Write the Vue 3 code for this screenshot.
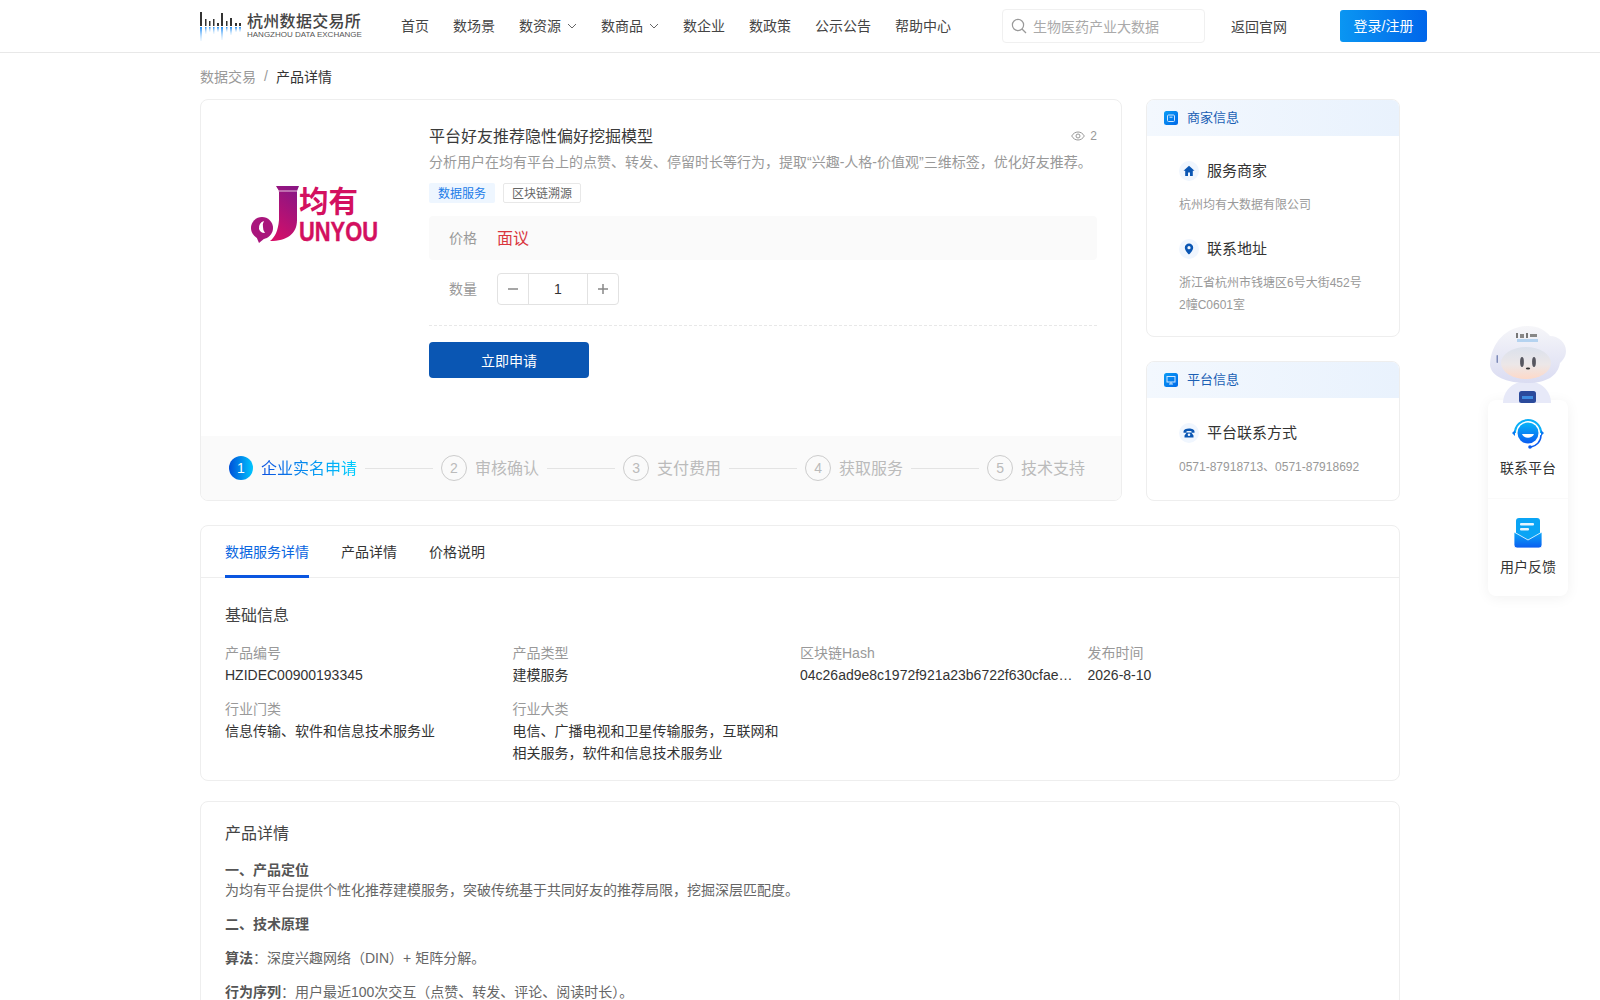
<script setup>
const nav = [
  { t: '首页' }, { t: '数场景' }, { t: '数资源', arrow: true }, { t: '数商品', arrow: true },
  { t: '数企业' }, { t: '数政策' }, { t: '公示公告' }, { t: '帮助中心' }
]
const steps = ['审核确认', '支付费用', '获取服务', '技术支持']
const tabs = ['数据服务详情', '产品详情', '价格说明']
const info = [
  { l: '产品编号', v: 'HZIDEC00900193345' },
  { l: '产品类型', v: '建模服务' },
  { l: '区块链Hash', v: '04c26ad9e8c1972f921a23b6722f630cfae8d4', cut: true },
  { l: '发布时间', v: '2026-8-10' },
  { l: '行业门类', v: '信息传输、软件和信息技术服务业' },
  { l: '行业大类', v: '电信、广播电视和卫星传输服务，互联网和相关服务，软件和信息技术服务业' }
]
const logoBars = [
  [0, 14, 2], [5, 7, 1.5], [9, 5, 1.5], [13, 7, 1.5], [17, 3, 2], [21, 13, 2], [26, 5, 1.5], [30, 8, 2], [35, 3, 2], [39, 3, 2]
]
</script>

<template>
  <div class="page">
    <header class="top">
      <div class="brand">
        <svg class="brand-mark" width="42" height="30" viewBox="0 0 42 30">
          <defs>
            <linearGradient id="fade" x1="0" y1="0" x2="0" y2="1">
              <stop offset="0" stop-color="#1f8cf5" />
              <stop offset="1" stop-color="#bfe0fb" stop-opacity=".2" />
            </linearGradient>
          </defs>
          <g v-for="(b, i) in logoBars" :key="i">
            <rect :x="b[0]" :y="15 - b[1]" :width="b[2]" :height="b[1]" fill="#333" />
            <rect :x="b[0]" y="16" :width="b[2]" :height="Math.max(b[1], 5)" fill="url(#fade)" />
          </g>
        </svg>
        <div class="brand-text">
          <div class="brand-cn">杭州数据交易所</div>
          <div class="brand-en">HANGZHOU DATA EXCHANGE</div>
        </div>
      </div>
      <nav class="nav">
        <span v-for="n in nav" :key="n.t" class="nav-item">
          {{ n.t }}
          <svg v-if="n.arrow" class="chev" width="10" height="6" viewBox="0 0 10 6">
            <path d="M1 1l4 4 4-4" fill="none" stroke="#666" stroke-width="1" />
          </svg>
        </span>
      </nav>
      <div class="spacer"></div>
      <div class="search">
        <svg width="16" height="16" viewBox="0 0 16 16">
          <circle cx="7" cy="7" r="5.6" fill="none" stroke="#999" stroke-width="1.2" />
          <path d="M11 11l4 4" stroke="#999" stroke-width="1.2" />
        </svg>
        <span>生物医药产业大数据</span>
      </div>
      <a class="back">返回官网</a>
      <button class="login">登录/注册</button>
    </header>

    <div class="crumb"><span class="c1">数据交易</span><span class="sep">/</span><span class="c2">产品详情</span></div>

    <main class="wrap">
      <section class="upper">
        <div class="product">
          <div class="prod-top">
            <div class="logo-box">
              <svg class="junyou" width="132" height="80" viewBox="0 -10 132 80">
                <defs>
                  <linearGradient id="jg" x1="0.6" y1="0" x2="0.2" y2="1">
                    <stop offset="0" stop-color="#8c1583" />
                    <stop offset="1" stop-color="#d60f68" />
                  </linearGradient>
                </defs>
                <path d="M27 2H50L48 7V36C48 50 38 57 21 57C26 53 29 47 30 36V7Z" fill="url(#jg)" />
                <path d="M29 7H48" stroke="#e9c4de" stroke-width="1" />
                <circle cx="13" cy="44" r="11" fill="#a9157c" />
                <path d="M7 52l9 2-6 5z" fill="#a9157c" />
                <path d="M15 37a7 7 0 0 0-5 8 6 6 0 0 0 6 4 9 9 0 0 1-2-6 8 8 0 0 1 1-6z" fill="#fff" />
                <text class="jy-cn" x="50" y="28" font-size="29.500" fill="#d3105f">均有</text>
                <text class="jy-en" x="50" y="57" font-size="27" fill="#d3105f" stroke="#d3105f" stroke-width=".4" textLength="79" lengthAdjust="spacingAndGlyphs">UNYOU</text>
              </svg>
            </div>
            <div class="prod-info">
              <div class="title-row">
                <h1>平台好友推荐隐性偏好挖掘模型</h1>
                <span class="views">
                  <svg width="14" height="10" viewBox="0 0 14 10">
                    <path d="M.7 5C2.2 2.4 4.4 1 7 1s4.8 1.400 6.300 4C11.800 7.600 9.600 9 7 9S2.200 7.600.7 5z" fill="none" stroke="#999" />
                    <circle cx="7" cy="5" r="2" fill="none" stroke="#999" />
                  </svg>
                  2
                </span>
              </div>
              <p class="desc">分析用户在均有平台上的点赞、转发、停留时长等行为，提取“兴趣-人格-价值观”三维标签，优化好友推荐。</p>
              <div class="tags"><span class="tag blue">数据服务</span><span class="tag line">区块链溯源</span></div>
              <div class="price"><span class="lab">价格</span><span class="pv">面议</span></div>
              <div class="qty">
                <span class="lab">数量</span>
                <div class="stepper">
                  <span class="st-btn">
                    <svg width="12" height="12" viewBox="0 0 12 12"><path d="M1 6h10" stroke="#888" stroke-width="1.500" /></svg>
                  </span>
                  <span class="st-val">1</span>
                  <span class="st-btn">
                    <svg width="12" height="12" viewBox="0 0 12 12"><path d="M1 6h10M6 1v10" stroke="#888" stroke-width="1.500" /></svg>
                  </span>
                </div>
              </div>
              <div class="dash"></div>
              <button class="apply">立即申请</button>
            </div>
          </div>
          <div class="steps">
            <span class="dot-on">1</span>
            <span class="step-on">企业实名申请</span>
            <template v-for="(s, i) in steps" :key="s">
              <span class="line-s"></span>
              <span class="dot">{{ i + 2 }}</span>
              <span class="step">{{ s }}</span>
            </template>
          </div>
        </div>

        <aside class="side">
          <div class="side-card grow-a">
            <div class="side-head">
              <svg width="14" height="14" viewBox="0 0 14 14">
                <defs>
                  <linearGradient id="sq" x1="0" y1="0" x2="1" y2="1">
                    <stop offset="0" stop-color="#0a9cf5" /><stop offset="1" stop-color="#0068e8" />
                  </linearGradient>
                </defs>
                <rect width="14" height="14" rx="2.500" fill="url(#sq)" />
                <rect x="3.500" y="4" width="7" height="6.500" rx="1" fill="none" stroke="#cfe6ff" />
                <path d="M5.500 6.200h3" stroke="#cfe6ff" />
              </svg>
              <span>商家信息</span>
            </div>
            <div class="side-body">
              <div class="row-h">
                <span class="round">
                  <svg width="12" height="12" viewBox="0 0 12 12"><path d="M6 .8L.5 5.800h1.700V11h2.800V7.500h2V11h2.800V5.800h1.700z" fill="#0a56b3" /></svg>
                </span>
                <span class="rt">服务商家</span>
              </div>
              <p class="sub">杭州均有大数据有限公司</p>
              <div class="row-h mt">
                <span class="round">
                  <svg width="12" height="12" viewBox="0 0 12 12"><path fill-rule="evenodd" d="M6 .5a4.200 4.200 0 0 0-4.200 4.200C1.800 7.500 6 11.500 6 11.500s4.200-4 4.200-6.800A4.200 4.200 0 0 0 6 .5zm0 2.600a1.600 1.600 0 1 1 0 3.200 1.600 1.600 0 0 1 0-3.200z" fill="#0a56b3" /></svg>
                </span>
                <span class="rt">联系地址</span>
              </div>
              <p class="sub">浙江省杭州市钱塘区6号大街452号2幢C0601室</p>
            </div>
          </div>
          <div class="side-card grow-b">
            <div class="side-head">
              <svg width="14" height="14" viewBox="0 0 14 14">
                <rect width="14" height="14" rx="2.500" fill="url(#sq)" />
                <rect x="3" y="3.500" width="8" height="5.500" fill="none" stroke="#cfe6ff" />
                <path d="M5 11h4M7 9v2" stroke="#cfe6ff" />
              </svg>
              <span>平台信息</span>
            </div>
            <div class="side-body">
              <div class="row-h">
                <span class="round">
                  <svg width="12" height="12" viewBox="0 0 12 12"><path d="M.5 4.500C.5 2.600 3 1.500 6 1.500s5.500 1.100 5.500 3v1.200H8.500V4.300c-1.500-.5-3.500-.5-5 0v1.400H.5zM3.700 5.500h4.600l2.200 3v2h-9v-2zM6 6.500a1.300 1.300 0 1 0 0 2.600 1.300 1.300 0 0 0 0-2.600z" fill="#0a56b3" /></svg>
                </span>
                <span class="rt">平台联系方式</span>
              </div>
              <p class="sub">0571-87918713、0571-87918692</p>
            </div>
          </div>
        </aside>
      </section>

      <section class="card tabs-card">
        <div class="tabs">
          <span v-for="(t, i) in tabs" :key="t" class="tab" :class="{ on: i === 0 }">{{ t }}</span>
        </div>
        <div class="basic">
          <h2>基础信息</h2>
          <div class="grid">
            <div v-for="c in info" :key="c.l" class="cell">
              <div class="cl">{{ c.l }}</div>
              <div class="cv" :class="{ cut: c.cut }">{{ c.v }}</div>
            </div>
          </div>
        </div>
      </section>

      <section class="card detail">
        <h2>产品详情</h2>
        <p class="d0"><b>一、产品定位</b></p>
        <p class="d0">为均有平台提供个性化推荐建模服务，突破传统基于共同好友的推荐局限，挖掘深层匹配度。</p>
        <p class="d1"><b>二、技术原理</b></p>
        <p class="d1"><b>算法</b>：深度兴趣网络（DIN）+ 矩阵分解。</p>
        <p class="d1"><b>行为序列</b>：用户最近100次交互（点赞、转发、评论、阅读时长）。</p>
      </section>
    </main>

    <div class="float">
      <svg class="robot" width="80" height="78" viewBox="0 0 80 78">
        <defs>
          <linearGradient id="hd" x1="0" y1="0" x2="0" y2="1">
            <stop offset="0" stop-color="#f6f6f9" /><stop offset="1" stop-color="#dadcf2" />
          </linearGradient>
          <linearGradient id="vs" x1="0" y1="0" x2="0" y2="1">
            <stop offset="0" stop-color="#dbe1ec" /><stop offset=".55" stop-color="#ece7e8" /><stop offset="1" stop-color="#fdd9c8" />
          </linearGradient>
        </defs>
        <path d="M15 78c0-12 10-22 24-22s24 10 24 22z" fill="#e7e9f8" />
        <rect x="31" y="66" width="17" height="12" rx="2.500" fill="#2b4a9b" />
        <rect x="34" y="71" width="11" height="3" fill="#3d8be0" />
        <path d="M2 40C3 16 20 1 40 1c10 0 17 4 22 10 9 0 16 7 16 15 0 6-4 10-6 12-2 13-14 20-32 20C20 58 3 52 2 40z" fill="url(#hd)" />
        <ellipse cx="38" cy="38" rx="25" ry="16" fill="url(#vs)" />
        <ellipse cx="34" cy="37" rx="1.900" ry="5" fill="#56565f" />
        <ellipse cx="46" cy="37" rx="1.900" ry="5" fill="#56565f" />
        <ellipse cx="40" cy="43.500" rx="2.200" ry="1.100" fill="#333" />
        <rect x="28" y="8" width="2" height="5" fill="#777" /><rect x="32" y="9" width="4" height="4" fill="#888" />
        <rect x="38" y="8" width="2" height="5" fill="#777" /><rect x="42" y="9" width="7" height="3" fill="#888" />
        <rect x="29" y="14" width="21" height="3" fill="#b5d3f0" />
        <rect x="8.500" y="30" width="1.500" height="8" rx=".7" fill="#7d8ab8" />
      </svg>
      <div class="f-item">
        <svg width="34" height="30" viewBox="0 0 34 30">
          <defs>
            <linearGradient id="hs" x1="0" y1="0" x2="0" y2="1">
              <stop offset="0" stop-color="#08b4f8" /><stop offset="1" stop-color="#0a5cf0" />
            </linearGradient>
          </defs>
          <circle cx="17" cy="14" r="10.500" fill="url(#hs)" />
          <path d="M4 14a13 13 0 0 1 26 0" fill="none" stroke="#0ab0f8" stroke-width="2" />
          <path d="M1 14l3-3v6zM33 14l-3-3v6z" fill="#0a78f0" />
          <path d="M30 16c0 7-5 11-10 12" fill="none" stroke="#0a5cf0" stroke-width="1.500" />
          <circle cx="19" cy="28" r="1.800" fill="#0a5cf0" />
          <path d="M11 15c2 5 10 5 12 0z" fill="#fff" />
        </svg>
        <span>联系平台</span>
      </div>
      <div class="f-item second">
        <svg width="28" height="30" viewBox="0 0 28 30">
          <defs>
            <linearGradient id="ml" x1="0" y1="0" x2="0" y2="1">
              <stop offset="0" stop-color="#0aa8f8" /><stop offset="1" stop-color="#0a5cf0" />
            </linearGradient>
          </defs>
          <rect x="2" y="0" width="24" height="22" rx="3" fill="#0aa4f5" />
          <rect x="6" y="5" width="14" height="2.400" rx="1" fill="#e4f4ff" />
          <rect x="6" y="10" width="9" height="2.400" rx="1" fill="#e4f4ff" />
          <path d="M0 14l14 8 14-8v13a3 3 0 0 1-3 3H3a3 3 0 0 1-3-3z" fill="url(#ml)" stroke="#fff" stroke-width=".8" />
        </svg>
        <span>用户反馈</span>
      </div>
    </div>
  </div>
</template>

<style>
html, body { margin: 0; background: #fff; }
</style>

<style scoped>
* { box-sizing: border-box; }
.page {
  height: 1000px;
  overflow: hidden;
  position: relative;
  font-family: "Liberation Sans", "Noto Sans CJK SC", sans-serif;
  font-size: 14px;
  color: #333;
}
.top {
  height: 53px;
  display: flex;
  align-items: center;
  padding: 0 173px 0 200px;
  border-bottom: 1px solid #e8e8e8;
}
.brand { display: flex; align-items: center; width: 162px; margin-right: 39px; }
.brand-mark { flex: none; margin-right: 5px; }
.brand-cn { font-size: 16px; line-height: 19px; font-weight: 500; color: #444; letter-spacing: .3px; white-space: nowrap; }
.brand-en { font-size: 8px; line-height: 10px; margin-top: -1px; color: #555; white-space: nowrap; }
.nav { display: flex; gap: 24px; padding-bottom: 2px; }
.nav-item { display: flex; align-items: center; color: #444; white-space: nowrap; }
.chev { margin-left: 6px; margin-top: 2px; }
.spacer { flex: 1; }
.search {
  width: 203px; height: 34px; margin-right: 26px; padding-left: 8px;
  display: flex; align-items: center; gap: 6px;
  border: 1px solid #f0f0f0; border-radius: 4px; color: #aaa;
}
.back { width: 56px; margin-right: 53px; color: #444; white-space: nowrap; }
.login {
  width: 87px; height: 32px; margin-bottom: 1px; padding: 0 0 2px; border: 0; border-radius: 3px;
  background: linear-gradient(90deg, #0a96f2, #0066ea); color: #fff; font: inherit;
}
.crumb { height: 46px; padding: 0 0 1px 200px; display: flex; align-items: center; }
.c1 { color: #999; }
.sep { color: #999; margin: 0 8px; }
.c2 { color: #333; }
.wrap { width: 1200px; margin: 0 auto; display: flex; flex-direction: column; }
.upper { display: flex; gap: 24px; height: 402px; }
.product {
  width: 922px; border: 1px solid #eee; border-radius: 8px;
  display: flex; flex-direction: column; overflow: hidden;
}
.prod-top { flex: 1; display: flex; }
.logo-box { width: 228px; height: 228px; flex: none; display: flex; align-items: center; justify-content: center; }
.jy-cn { font-family: "Noto Sans CJK SC", sans-serif; font-weight: 700; }
.jy-en { font-family: "Liberation Sans", sans-serif; font-weight: 700; }
.prod-info { flex: 1; padding: 24px 24px 0 0; min-width: 0; }
.title-row { display: flex; justify-content: space-between; align-items: center; height: 24px; }
h1 { margin: 0; padding-bottom: 2px; font-size: 16px; font-weight: 400; color: #3a3a3a; }
.views { display: flex; align-items: center; gap: 5px; font-size: 12px; color: #999; }
.desc { margin: 3px 0 0; line-height: 22px; color: #999; white-space: nowrap; }
.tags { display: flex; gap: 8px; margin-top: 10px; }
.tag { height: 20px; line-height: 20px; padding: 0 8px; font-size: 12px; border-radius: 2px; border: 1px solid transparent; }
.tag.blue { width: 66px; background: #eef6ff; color: #1b7ce8; padding: 0 8px; }
.tag.line { width: 78px; border-color: #e8e8e8; color: #666; }
.price {
  height: 44px; margin-top: 13px; padding: 0 0 2px 20px; background: #fafafa; border-radius: 4px;
  display: flex; align-items: center;
}
.lab { width: 48px; color: #999; flex: none; }
.pv { font-size: 16px; color: #d9363e; }
.qty { height: 32px; margin-top: 13px; padding-left: 20px; display: flex; align-items: center; }
.qty .lab { padding-bottom: 2px; }
.stepper { width: 122px; height: 32px; border: 1px solid #e2e2e2; border-radius: 4px; display: flex; }
.st-btn { width: 30px; display: flex; align-items: center; justify-content: center; }
.st-val {
  flex: 1; display: flex; align-items: center; justify-content: center;
  border-left: 1px solid #e2e2e2; border-right: 1px solid #e2e2e2; color: #333;
}
.dash { margin-top: 20px; border-top: 1px dashed #e8e8e8; }
.apply {
  display: block; width: 160px; height: 36px; margin-top: 16px; padding: 0 0 1px; border: 0; border-radius: 4px;
  background: #0a56b3; color: #fff; font: inherit;
}
.steps { height: 64px; flex: none; padding-left: 28px; background: #fafafa; display: flex; align-items: center; font-size: 16px; }
.dot-on {
  width: 24px; height: 24px; border-radius: 50%; color: #fff; font-size: 14px;
  background: linear-gradient(90deg, #0050d8, #00c6ff);
  display: flex; align-items: center; justify-content: center;
}
.step-on {
  margin-left: 8px; padding-bottom: 2px;
  background: linear-gradient(90deg, #0a50e0, #00d0ff);
  -webkit-background-clip: text; background-clip: text; color: transparent;
}
.line-s { width: 68px; height: 1px; margin: 0 8px; background: #e3e3e3; }
.dot {
  width: 26px; height: 26px; border-radius: 50%; border: 1px solid #ccc; color: #bbb; font-size: 14px;
  display: flex; align-items: center; justify-content: center;
}
.step { margin-left: 8px; padding-bottom: 2px; color: #bbb; }
.side { width: 254px; display: flex; flex-direction: column; gap: 24px; }
.side-card { border: 1px solid #eee; border-radius: 8px; overflow: hidden; }
.grow-a { height: 238px; }
.grow-b { height: 140px; }
.side-head {
  height: 36px; padding-left: 17px; display: flex; align-items: center; gap: 9px;
  background: linear-gradient(90deg, #f3f8fe, #e9f2fd); color: #1a5fb4; font-size: 13px;
}
.side-head span { padding-bottom: 3px; }
.side-body { padding: 25px 32px 0; }
.row-h { display: flex; align-items: center; gap: 8px; height: 20px; font-size: 15px; color: #333; }
.row-h.mt { margin-top: 23px; }
.rt { padding-bottom: 3px; }
.round { width: 20px; height: 20px; border-radius: 50%; background: #f0f6fe; display: flex; align-items: center; justify-content: center; }
.sub { margin: 13px 0 0; font-size: 12px; line-height: 22px; color: #999; }
.card { border: 1px solid #eee; border-radius: 8px; }
.tabs-card { margin-top: 24px; height: 256px; }
.tabs { height: 52px; display: flex; gap: 32px; padding: 0 24px; border-bottom: 1px solid #eee; }
.tab { height: 52px; line-height: 53px; color: #333; }
.tab.on { color: #0a66e0; border-bottom: 3px solid #0a56e0; }
.basic { padding: 26px 24px 0; }
h2 { margin: 0; font-size: 16px; line-height: 24px; font-weight: 400; color: #444; }
.grid { margin-top: 14px; display: grid; grid-template-columns: repeat(4, 1fr); row-gap: 12px; }
.cell { padding-right: 10px; min-width: 0; line-height: 22px; }
.cl { color: #999; }
.cv { color: #333; }
.cv.cut { overflow: hidden; white-space: nowrap; text-overflow: ellipsis; }
.detail { margin-top: 20px; padding: 20px 24px; height: 400px; }
.detail h2 { margin-bottom: 14px; }
.detail p { margin: 0; line-height: 20px; color: #666; }
.detail .d1 { margin-top: 14px; }
.detail b { font-weight: 700; color: #555; }
.float {
  position: absolute; left: 1488px; top: 400px; width: 80px; height: 196px;
  background: #fff; border-radius: 8px;
  box-shadow: 0 2px 14px rgba(0, 0, 0, .06);
}
.robot { position: absolute; left: 0; top: -75px; }
.f-item { position: relative; height: 98px; padding-top: 19px; display: flex; flex-direction: column; align-items: center; }
.f-item span { margin-top: 9px; line-height: 20px; color: #333; }
.f-item.second { border-top: 1px solid #fafafa; }
</style>
